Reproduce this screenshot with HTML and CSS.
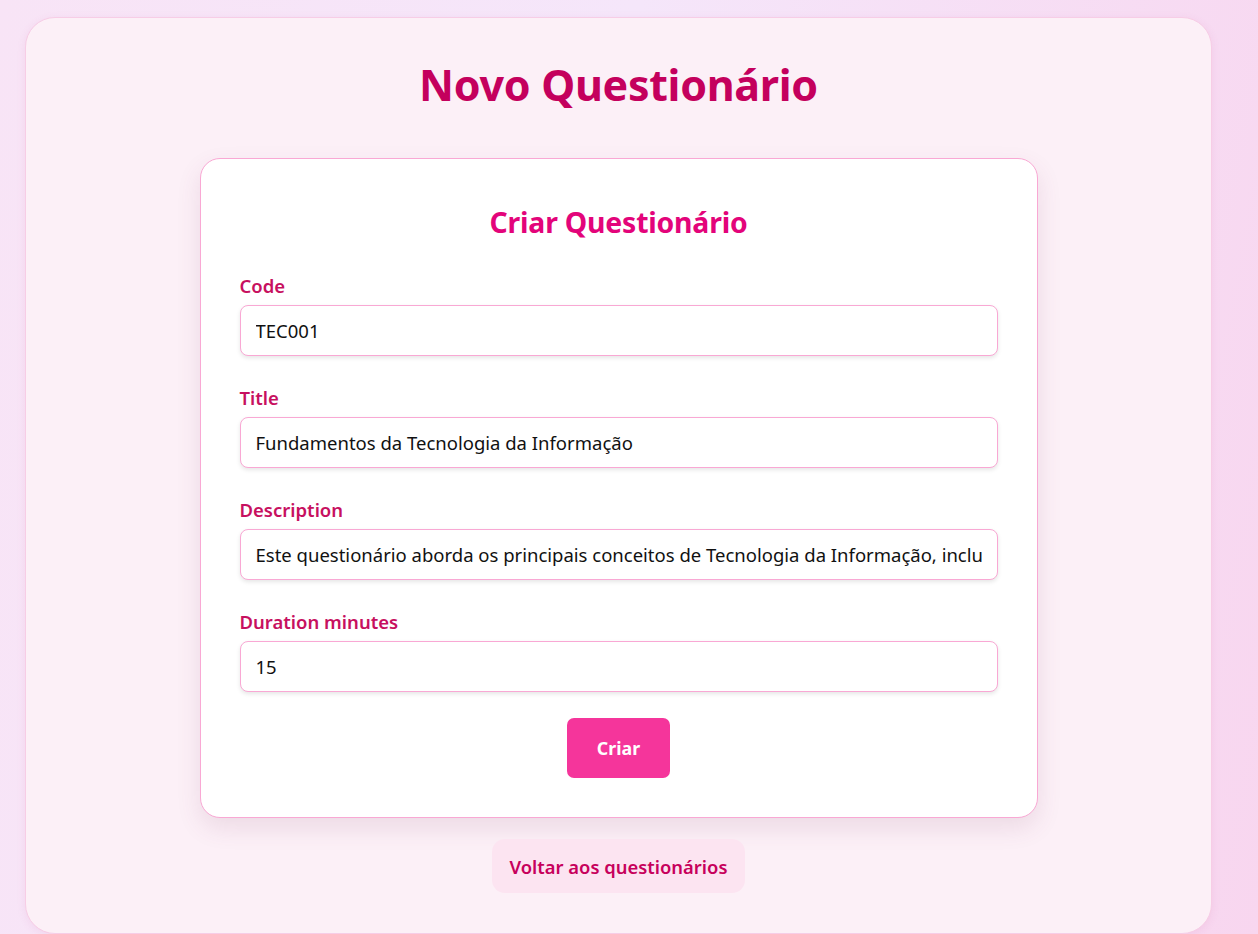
FILE: index.html
```html
<!DOCTYPE html>
<html lang="pt">
<head>
<meta charset="utf-8">
<title>Novo Questionário</title>
<link rel="stylesheet" href="styles.css">
</head>
<body>
<main class="page">
  <h1 class="page-title">Novo Questionário</h1>
  <section class="card">
    <h2 class="card-title">Criar Questionário</h2>
    <form class="form">
      <div class="field">
        <label class="label" for="code">Code</label>
        <input class="input" id="code" type="text" value="TEC001">
      </div>
      <div class="field">
        <label class="label" for="title">Title</label>
        <input class="input" id="title" type="text" value="Fundamentos da Tecnologia da Informação">
      </div>
      <div class="field">
        <label class="label" for="description">Description</label>
        <input class="input" id="description" type="text" value="Este questionário aborda os principais conceitos de Tecnologia da Informação, incluindo hardware, software e redes.">
      </div>
      <div class="field">
        <label class="label" for="duration">Duration minutes</label>
        <input class="input" id="duration" type="text" value="15">
      </div>
      <div class="actions">
        <button class="btn-primary" type="button">Criar</button>
      </div>
    </form>
  </section>
  <a class="back-link" href="#">Voltar aos questionários</a>
</main>
</body>
</html>
```
FILE: styles.css
```css
* { box-sizing: border-box; }

html, body { height: 100%; }

body {
  margin: 0;
  padding: 17px 46px 0 25px;
  font-family: "Noto Sans", "Open Sans", sans-serif;
  background: linear-gradient(100deg, #f8e4f6 0%, #f5e6fa 45%, #f8d6ef 100%);
  overflow: hidden;
}

.page {
  display: flex;
  flex-direction: column;
  align-items: center;
  background: #fcf0f7;
  border: 1px solid #f7cde6;
  border-radius: 30px;
  padding: 37px 0 40px;
  box-shadow: 0 2px 8px rgba(200, 80, 150, 0.10);
}

.page-title {
  margin: 0 0 43px;
  font-size: 43px;
  line-height: 60px;
  font-weight: 700;
  color: #c4005d;
  letter-spacing: -0.3px;
}

.card {
  width: 838px;
  background: #ffffff;
  border: 1px solid #f9a8d4;
  border-radius: 20px;
  padding: 40px 39px 39px;
  box-shadow: 0 10px 24px rgba(120, 60, 100, 0.12);
}

.card-title {
  margin: 0 0 28px;
  text-align: center;
  font-size: 28.4px;
  line-height: 46px;
  font-weight: 700;
  color: #e3047a;
  letter-spacing: -0.2px;
}

.form {
  display: flex;
  flex-direction: column;
  gap: 29px;
}

.field {
  display: flex;
  flex-direction: column;
  gap: 7px;
}

.label {
  font-size: 18.5px;
  line-height: 25px;
  font-weight: 600;
  color: #c7105f;
}

.input {
  height: 51px;
  width: 100%;
  padding: 0 15px;
  border: 1px solid #f9a8d4;
  border-radius: 8px;
  background: #fff;
  font-family: inherit;
  font-size: 18.5px;
  color: #111;
  box-shadow: 0 2px 4px rgba(0, 0, 0, 0.10);
  outline: none;
}

.actions {
  display: flex;
  justify-content: center;
  margin-top: -3px;
}

.btn-primary {
  height: 60px;
  width: 103px;
  border: none;
  border-radius: 7px;
  background: #f5359b;
  color: #fff;
  font-family: inherit;
  font-size: 17.8px;
  font-weight: 700;
  cursor: pointer;
}

.back-link {
  margin-top: 21px;
  display: inline-flex;
  align-items: center;
  justify-content: center;
  height: 54px;
  width: 253px;
  border-radius: 13px;
  background: #fce4f1;
  color: #c7005c;
  font-size: 18.4px;
  font-weight: 600;
  text-decoration: none;
}
```
